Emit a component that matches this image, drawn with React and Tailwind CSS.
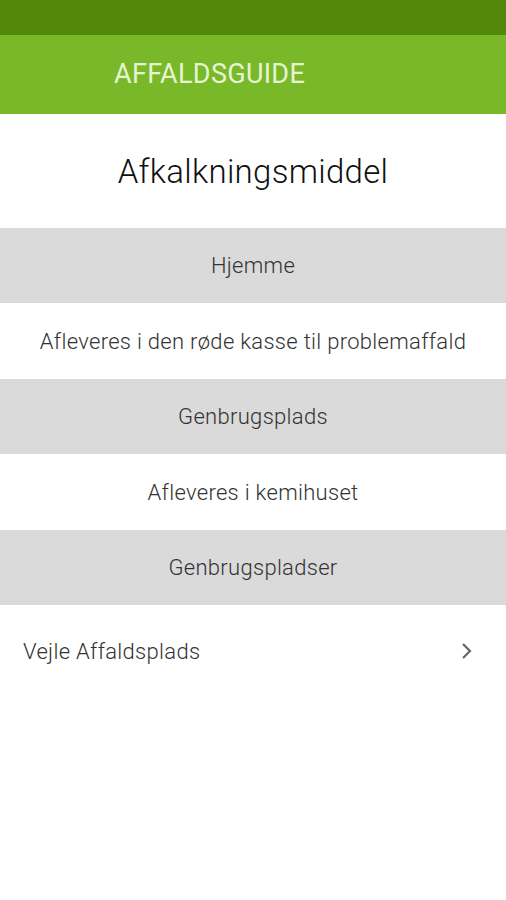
import React from 'react';

const sections = [
  { heading: 'Hjemme', text: 'Afleveres i den røde kasse til problemaffald' },
  { heading: 'Genbrugsplads', text: 'Afleveres i kemihuset' },
];

const places = ['Vejle Affaldsplads'];

const App = () => {
  return (
    <div className="min-h-[900px] bg-white font-['Roboto',sans-serif]">
      {/* Status bar */}
      <div className="h-[35px] bg-[#51880b]" />

      {/* Toolbar */}
      <div className="h-[79px] bg-[#79b929] flex items-center pl-[114px]">
        <h1 className="text-[27px] text-[#e6f4d4] tracking-[0.3px]">AFFALDSGUIDE</h1>
      </div>

      {/* Title */}
      <div className="h-[114px] flex items-center justify-center">
        <h2 className="text-[33px] font-light text-[#111] tracking-[0.3px] mt-[2px]">Afkalkningsmiddel</h2>
      </div>

      {sections.map((s) => (
        <div key={s.heading}>
          <div className="h-[75px] bg-[#dadada] flex items-center justify-center">
            <span className="text-[22px] text-[#333] font-light tracking-[0.3px]">{s.heading}</span>
          </div>
          <div className="h-[76px] flex items-center justify-center">
            <span className="text-[22px] text-[#333] font-light tracking-[0.3px]">{s.text}</span>
          </div>
        </div>
      ))}

      <div className="h-[75px] bg-[#dadada] flex items-center justify-center">
        <span className="text-[22px] text-[#333] font-light tracking-[0.3px]">Genbrugspladser</span>
      </div>

      {places.map((p) => (
        <div key={p} className="h-[92px] flex items-center justify-between pl-[23px] pr-[32px]">
          <span className="text-[22px] text-[#333] font-light tracking-[0.3px]">{p}</span>
          <svg width="14" height="18" viewBox="0 0 14 18" fill="none">
            <path d="M3 2l7 7-7 7" stroke="#666" strokeWidth="2.2" />
          </svg>
        </div>
      ))}
    </div>
  );
};

export default App;
